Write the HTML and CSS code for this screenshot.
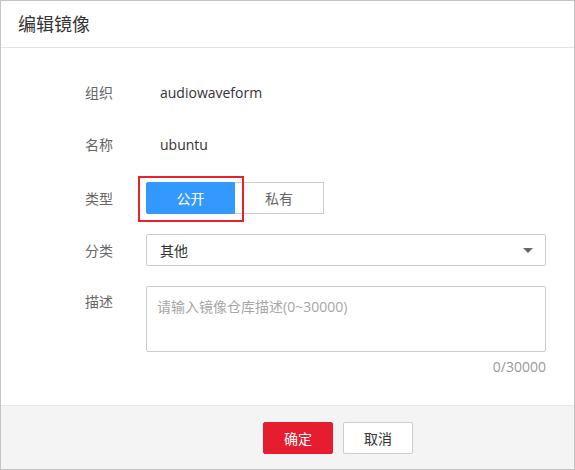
FILE: index.html
```html
<!DOCTYPE html>
<html lang="zh">
<head>
<meta charset="utf-8">
<title>编辑镜像</title>
<link rel="stylesheet" href="styles.css">
</head>
<body>
<div class="dialog">
  <div class="dialog-header">
    <h1 class="dialog-title">编辑镜像</h1>
  </div>
  <div class="dialog-body">
    <div class="form-row form-row-text">
      <div class="form-label">组织</div>
      <div class="form-value">audiowaveform</div>
    </div>
    <div class="form-row form-row-text">
      <div class="form-label">名称</div>
      <div class="form-value">ubuntu</div>
    </div>
    <div class="form-row">
      <div class="form-label">类型</div>
      <div class="form-control">
        <div class="toggle">
          <span class="toggle-btn toggle-active">公开</span>
          <span class="toggle-btn">私有</span>
          <span class="highlight"></span>
        </div>
      </div>
    </div>
    <div class="form-row">
      <div class="form-label">分类</div>
      <div class="form-control">
        <div class="select">
          <span class="select-text">其他</span>
          <span class="select-arrow"></span>
        </div>
      </div>
    </div>
    <div class="form-row form-row-top">
      <div class="form-label">描述</div>
      <div class="form-control">
        <div class="textarea"><span class="placeholder">请输入镜像仓库描述(0~30000)</span></div>
        <div class="counter">0/30000</div>
      </div>
    </div>
  </div>
  <div class="dialog-footer">
    <button class="btn btn-primary">确定</button>
    <button class="btn btn-default">取消</button>
  </div>
</div>
</body>
</html>
```

FILE: styles.css
```css
* { box-sizing: border-box; }
html, body { margin: 0; padding: 0; background: #fff; }
body {
  font-family: "Open Sans", "Noto Sans CJK SC", sans-serif;
  font-size: 14px;
  color: #333;
}
.dialog {
  width: 575px;
  height: 470px;
  border: 1px solid #c4c4c4;
  display: flex;
  flex-direction: column;
  background: #fff;
}
.dialog-header {
  height: 47px;
  border-bottom: 1px solid #e4e4e4;
  display: flex;
  align-items: center;
  padding-left: 17px;
}
.dialog-title {
  margin: 0;
  font-size: 18px;
  font-weight: normal;
  color: #333;
  line-height: 24px;
}
.dialog-body {
  flex: 1;
  padding: 30px 28px 0 84px;
  display: flex;
  flex-direction: column;
  gap: 20px;
}
.form-row {
  display: grid;
  grid-template-columns: 61px 1fr;
  align-items: center;
  min-height: 32px;
}
.form-row-text { margin-top: -2px; margin-bottom: 2px; }
.form-row-top { align-items: start; }
.form-row-top .form-label { line-height: 32px; }
.form-label { color: #666; }
.form-value { color: #333; padding-left: 14px; }
.toggle {
  position: relative;
  display: flex;
  width: 178px;
}
.toggle-btn {
  width: 89px;
  height: 32px;
  display: flex;
  align-items: center;
  justify-content: center;
  border: 1px solid #ccc;
  color: #666;
  background: #fff;
}
.toggle-btn + .toggle-btn { border-left: none; }
.toggle-active {
  background: #3399ff;
  border-color: #3399ff;
  color: #fff;
  border-radius: 2px 0 0 2px;
}
.highlight {
  position: absolute;
  left: -8px;
  top: -6px;
  width: 106px;
  height: 46px;
  border: 2px solid #e8222b;
}
.select {
  height: 32px;
  border: 1px solid #ccc;
  border-radius: 2px;
  display: flex;
  align-items: center;
  justify-content: space-between;
  padding: 0 12px 0 13px;
}
.select-text { color: #333; }
.select-arrow {
  width: 0;
  height: 0;
  border-left: 5px solid transparent;
  border-right: 5px solid transparent;
  border-top: 5px solid #666;
}
.textarea {
  height: 66px;
  border: 1px solid #ccc;
  border-radius: 2px;
  padding: 10px 10px;
}
.placeholder { color: #a6a6a6; line-height: 20px; }
.counter {
  text-align: right;
  color: #999;
  margin-top: 5px;
  line-height: 20px;
}
.dialog-footer {
  height: 64px;
  background: #f4f4f4;
  border-top: 1px solid #e8e8e8;
  display: flex;
  align-items: center;
  justify-content: flex-start;
  padding-left: 262px;
  gap: 10px;
}
.btn {
  width: 70px;
  height: 32px;
  font-family: inherit;
  font-size: 14px;
  border-radius: 2px;
  cursor: pointer;
  padding: 0;
}
.btn-primary {
  background: #e51d2e;
  border: 1px solid #e51d2e;
  color: #fff;
}
.btn-default {
  background: #fff;
  border: 1px solid #ccc;
  color: #333;
}
```
